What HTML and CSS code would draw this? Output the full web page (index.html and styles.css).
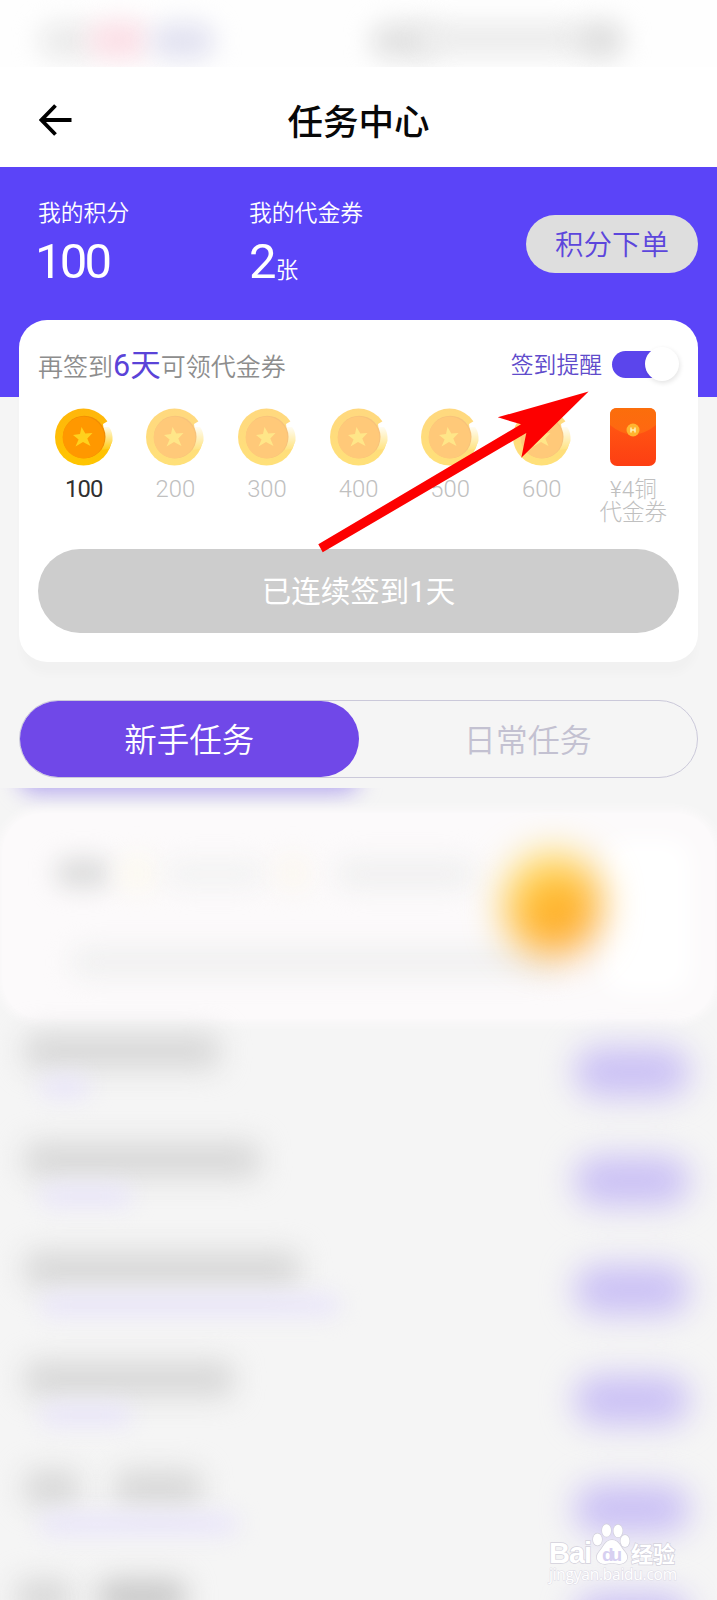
FILE: index.html
```html
<!DOCTYPE html>
<html lang="zh-CN">
<head>
<meta charset="utf-8">
<title>任务中心</title>
<link rel="stylesheet" href="styles.css">
</head>
<body>
<svg class="defs" aria-hidden="true">
  <defs>
    <linearGradient id="flap" x1="0" y1="0" x2="0" y2="1"><stop offset="0" stop-color="#fb6e0b"/><stop offset="1" stop-color="#ff6712"/></linearGradient>
    <linearGradient id="packet" x1="0" y1="0" x2="0" y2="1"><stop offset="0.3" stop-color="#ff5512"/><stop offset="1" stop-color="#fd3e13"/></linearGradient>
    <linearGradient id="rim" x1="0" y1="0" x2="0" y2="1"><stop offset="0" stop-color="#ffb60b"/><stop offset="1" stop-color="#ffc500"/></linearGradient>
    <linearGradient id="gleam" x1="0" y1="0" x2="0" y2="1"><stop offset="0" stop-color="#fffbe8"/><stop offset="1" stop-color="#ffcb10"/></linearGradient>
    <symbol id="coin" viewBox="0 0 58 58">
      <circle cx="28.5" cy="29" r="28.5" fill="url(#rim)"/>
      <path d="M60 8 L53 13 L48 16 L49 24 L58 31 Z" fill="#fff"/>
      <path d="M49 19 L54 19 Q58 24 57.500 33 L54 41 L47 42Z" fill="url(#gleam)"/>
      <circle cx="29.2" cy="29" r="21.300" fill="#f08c04"/>
      <circle cx="28.500" cy="29.500" r="20.900" fill="#ff9800"/>
      <path d="M26.500 19 L30.300 25.500 L37.500 25 L32.300 30.500 L35.500 38 L28 34 L20.500 38.500 L23.600 31.500 L18 27 L25 26Z" fill="#ffd11d"/>
    </symbol>
  </defs>
</svg>
<div class="screen">
  <div class="status">
    <i class="smudge s1"></i><i class="smudge s2"></i><i class="smudge s3"></i><i class="smudge s4"></i><i class="smudge s5"></i><i class="smudge s6"></i>
  </div>
  <header class="appbar">
    <svg class="back" viewBox="0 0 34 34"><path d="M16.500 2.500 L2.500 17 L16.500 31.500 M2.500 17 H32.500" fill="none" stroke="#000" stroke-width="3.800"/></svg>
    <h1>任务中心</h1>
  </header>
  <section class="summary">
    <div class="stat points"><div class="label">我的积分</div><div class="value">100</div></div>
    <div class="stat"><div class="label">我的代金券</div><div class="value">2<small>张</small></div></div>
    <div class="order">积分下单</div>
  </section>
  <section class="card">
    <div class="cardhead">
      <p class="hint">再签到<b>6天</b>可领代金券</p>
      <span class="remind">签到提醒</span>
      <span class="toggle"><i></i></span>
    </div>
    <div class="days">
      <div class="day now"><svg><use href="#coin"/></svg><span>100</span></div>
      <div class="day"><svg><use href="#coin"/></svg><span>200</span></div>
      <div class="day"><svg><use href="#coin"/></svg><span>300</span></div>
      <div class="day"><svg><use href="#coin"/></svg><span>400</span></div>
      <div class="day"><svg><use href="#coin"/></svg><span>500</span></div>
      <div class="day"><svg><use href="#coin"/></svg><span>600</span></div>
      <div class="day gift">
        <svg viewBox="0 0 58 58"><rect x="6" width="46" height="58" rx="7" fill="url(#packet)"/><path d="M6 7 Q6 0 13 0 H45 Q52 0 52 7 V17 Q29 36 6 17Z" fill="url(#flap)"/><circle cx="29" cy="22" r="6.500" fill="#ffb52f"/><path d="M27 19.500 V24.500 M31 19.500 V24.500 M27 22 H31" fill="none" stroke="#fff0b8" stroke-width="1.500"/></svg>
        <span>¥4铜<br>代金券</span>
      </div>
    </div>
    <div class="checked">已连续签到1天</div>
    <svg class="pointer" viewBox="0 0 272 162"><path d="M271.600 .500 L180.700 26.300 L204 33.300 L1.300 153.300 L5.700 161.300 L209.300 42 L204.300 66.700Z" fill="#fd0000"/></svg>
  </section>
  <nav class="tabs"><div class="tab active">新手任务</div><div class="tab">日常任务</div></nav>
  <div class="tabshade"><i></i></div>
  <section class="promo">
    <i class="smudge p0"></i><i class="smudge p1"></i><i class="smudge p2"></i><i class="smudge p3"></i><i class="smudge p4"></i><i class="smudge p5"></i><i class="smudge p6"></i><i class="smudge p7"></i>
  </section>
  <section class="tasks">
    <div class="task"><div class="lines"><i class="name w1"></i><i class="note n1"></i></div><i class="pill"></i></div>
    <div class="task"><div class="lines"><i class="name w2"></i><i class="note n2"></i></div><i class="pill"></i></div>
    <div class="task"><div class="lines"><i class="name w3"></i><i class="note n3"></i></div><i class="pill"></i></div>
    <div class="task"><div class="lines"><i class="name w4"></i><i class="note n2"></i></div><i class="pill"></i></div>
    <div class="task"><div class="lines"><div class="pair"><i class="name w5"></i><i class="name w6"></i></div><i class="note n4"></i></div><i class="pill"></i></div>
    <div class="task"><div class="lines"><div class="pair last"><i class="name w5"></i><i class="name w6"></i></div></div><i class="pill"></i></div>
  </section>
  <svg class="mark" viewBox="0 0 140 70">
    <g fill="#fff" stroke="#d3d1dc" stroke-width="1.4" paint-order="stroke">
      <text class="logo" x="6" y="43" textLength="43">Bai</text>
      <ellipse cx="54.500" cy="19.500" rx="4.500" ry="6"/><ellipse cx="63.500" cy="10.500" rx="4.500" ry="6.300"/><ellipse cx="75" cy="11" rx="4.500" ry="6.300"/><ellipse cx="82" cy="21" rx="4.500" ry="6"/>
      <path d="M69 20 C76 20 78 28 82 32 C87 38 83 44 76 44 C72 43 66 43 62 44 C55 44 51 38 56 32 C60 28 62 20 69 20Z"/>
      <text class="du" x="59" y="41" textLength="20">du</text>
      <text class="cn" x="88" y="42" textLength="44">经验</text>
      <text class="url" x="6" y="60" textLength="128">jingyan.baidu.com</text>
    </g>
  </svg>
</div>
</body>
</html>
```
FILE: styles.css
```css
* { box-sizing: border-box; }
body { margin: 0; font-family: Roboto, "Noto Sans CJK SC", sans-serif; background: #f5f5f5; }
i { font-style: normal; display: block; }
.defs { position: absolute; width: 0; height: 0; }
.screen { position: relative; width: 717px; height: 1600px; overflow: hidden; background: #f5f5f5; }
.status { position: relative; height: 67px; background: #fefefe; overflow: hidden; }
.smudge { position: absolute; border-radius: 20px; filter: blur(12px); }
.s1 { left: 38px; top: 22px; width: 60px; height: 38px; background: #ececec; }
.s2 { left: 88px; top: 20px; width: 62px; height: 40px; background: #fbe0e7; }
.s3 { left: 150px; top: 22px; width: 65px; height: 38px; background: #e3e3f1; }
.s4 { left: 370px; top: 22px; width: 70px; height: 38px; background: #e3e3e3; }
.s5 { left: 420px; top: 22px; width: 165px; height: 34px; background: #ececec; }
.s6 { left: 575px; top: 20px; width: 50px; height: 40px; background: #e0e0e0; }
.appbar { position: relative; height: 100px; background: #fff; display: flex; align-items: center; padding: 5px 39px 0; }
.appbar h1 { flex: 1; margin: 0 34px 0 0; text-align: center; font-size: 35.500px; line-height: 50px; font-weight: 500; padding-top: 7px; color: #080808; }
.back { width: 34px; height: 34px; }
.summary { height: 230px; background: #5b44f8; display: flex; padding: 30px 19px 0 38px; color: #fff; }
.stat { flex: 1; }
.stat.points { flex: 0 0 211px; }
.label { font-size: 22.800px; line-height: 34px; font-weight: 350; }
.value { font-size: 49px; line-height: 56px; margin-top: 3px; letter-spacing: -2.800px; font-weight: 400; margin-left: -3px; }
.stat:not(.points) .value { margin-left: 0; }
.value small { font-size: 22.500px; letter-spacing: 0; margin-left: 2px; font-weight: 350; }
.order { width: 172px; height: 58px; margin-top: 18px; border-radius: 29px; background: #dedede; color: #5c46dc; font-size: 28.500px; line-height: 61px; text-align: center; font-weight: 350; }
.card { position: relative; height: 342px; margin: -77px 19px 0; border-radius: 28px; background: #fff; padding: 0 19px; box-shadow: 0 14px 10px -2px rgba(60,60,60,.02); }
.cardhead { display: flex; align-items: center; height: 88px; }
.hint { margin: 0; flex: 1; color: #8d8d8d; font-size: 25px; line-height: 40px; font-weight: 350; white-space: nowrap; padding-top: 5px; }
.hint b { color: #5a43d8; font-size: 30.500px; font-weight: 400; }
.remind { color: #604bcb; font-size: 22.800px; line-height: 36px; margin-right: 10px; font-weight: 350; padding-top: 4px; }
.toggle { display: flex; justify-content: flex-end; align-items: center; width: 67px; height: 27px; border-radius: 14px; background: linear-gradient(90deg, #5b45ec 48px, transparent 48px); }
.toggle i { width: 34px; height: 34px; border-radius: 50%; background: #fff; box-shadow: 1px 2px 5px rgba(0,0,0,.11); }
.days { display: flex; height: 141px; margin: 0 -1px 0 0; }
.day { flex: none; width: 91.600px; display: flex; flex-direction: column; align-items: center; color: #c0c0c0; font-size: 23.800px; line-height: 23px; text-align: center; font-weight: 350; }
.day svg { width: 58px; height: 58px; opacity: .52; }
.day span { padding-top: 12px; white-space: nowrap; }
.day.now { color: #303030; font-weight: 400; letter-spacing: -.8px; }
.day.now svg, .day.gift svg { opacity: 1; }
.day.gift { font-size: 22.500px; font-weight: 300; }
.checked { height: 84px; border-radius: 42px; background: #cdcdcd; color: #fff; font-size: 29.500px; line-height: 87px; text-align: center; }
.pointer { position: absolute; left: 298px; top: 71px; width: 272px; height: 162px; }
.tabs { display: flex; height: 78px; margin: 38px 19px 0; border: 1px solid #cbc9da; border-radius: 39px; }
.tab { flex: 1; text-align: center; font-size: 32px; line-height: 81px; color: #c3c1d1; font-weight: 350; }
.tab.active { height: 76px; border-radius: 38px; background: #7048e8; color: #fff; font-size: 32.500px; }
.tabshade { height: 30px; margin-top: 10px; overflow: hidden; }
.tabshade i { width: 340px; height: 34px; margin: -30px 0 0 19px; border-radius: 15px; background: #b0a2ee; filter: blur(11px); }
.promo { position: relative; height: 206px; margin: -5px 2px 5px; border-radius: 40px; background: #fcfafb; box-shadow: 0 0 8px 4px #fcfafb; }
.p0 { left: 602px; top: 26px; width: 86px; height: 154px; background: #fff; }
.p1 { left: 53px; top: 45px; width: 56px; height: 30px; background: #dcdcdc; }
.p2 { left: 116px; top: 41px; width: 38px; height: 38px; background: #fcf9f0; }
.p3 { left: 163px; top: 47px; width: 100px; height: 28px; background: #f3f3f3; }
.p4 { left: 273px; top: 41px; width: 36px; height: 38px; background: #fbf7f0; }
.p5 { left: 333px; top: 45px; width: 140px; height: 32px; background: #f1f1f1; }
.p6 { left: 68px; top: 133px; width: 490px; height: 32px; background: #f1f1f1; }
.p7 { left: 500px; top: 38px; width: 102px; height: 108px; border-radius: 50%; background: radial-gradient(circle at 54% 58%, #ffac1c 10%, transparent 55%), linear-gradient(155deg, #ffdc6a 20%, #ffc552 55%, #fbb98c 95%); filter: blur(18px); }
.tasks { padding: 9px 27px 0 24px; }
.task { display: flex; justify-content: space-between; height: 109.200px; }
.name { height: 36px; border-radius: 12px; background: #d8d8d8; filter: blur(14px); }
.note { height: 20px; margin: 8px 0 0 16px; border-radius: 10px; background: #e9e5fa; filter: blur(11px); }
.pair { display: flex; gap: 34px; }
.pair.last { margin-left: -8px; gap: 26px; }
.pair.last .w6 { background: #c9c9c9; }
.w1 { width: 196px; }
.w2 { width: 236px; }
.w3 { width: 276px; }
.w4 { width: 210px; }
.w5 { width: 56px; }
.w6 { width: 88px; }
.n1 { width: 50px; }
.n2 { width: 92px; }
.n3 { width: 300px; }
.n4 { width: 198px; }
.pill { width: 116px; height: 50px; margin: 14px 0 0; border-radius: 25px; background: #cbc1f5; filter: blur(16px); }
.mark { position: absolute; left: 543px; top: 1520px; width: 140px; height: 70px; }
.logo { font: 700 29px "Liberation Sans", sans-serif; }
.du { font: 700 19px "Liberation Sans", sans-serif; fill: #d7d0f1; stroke: none; }
.cn { font: 700 22px "Noto Sans CJK SC", sans-serif; }
.url { font: 400 15.500px "Open Sans", sans-serif; stroke: #dddbe6; stroke-width: 1px; }
```
